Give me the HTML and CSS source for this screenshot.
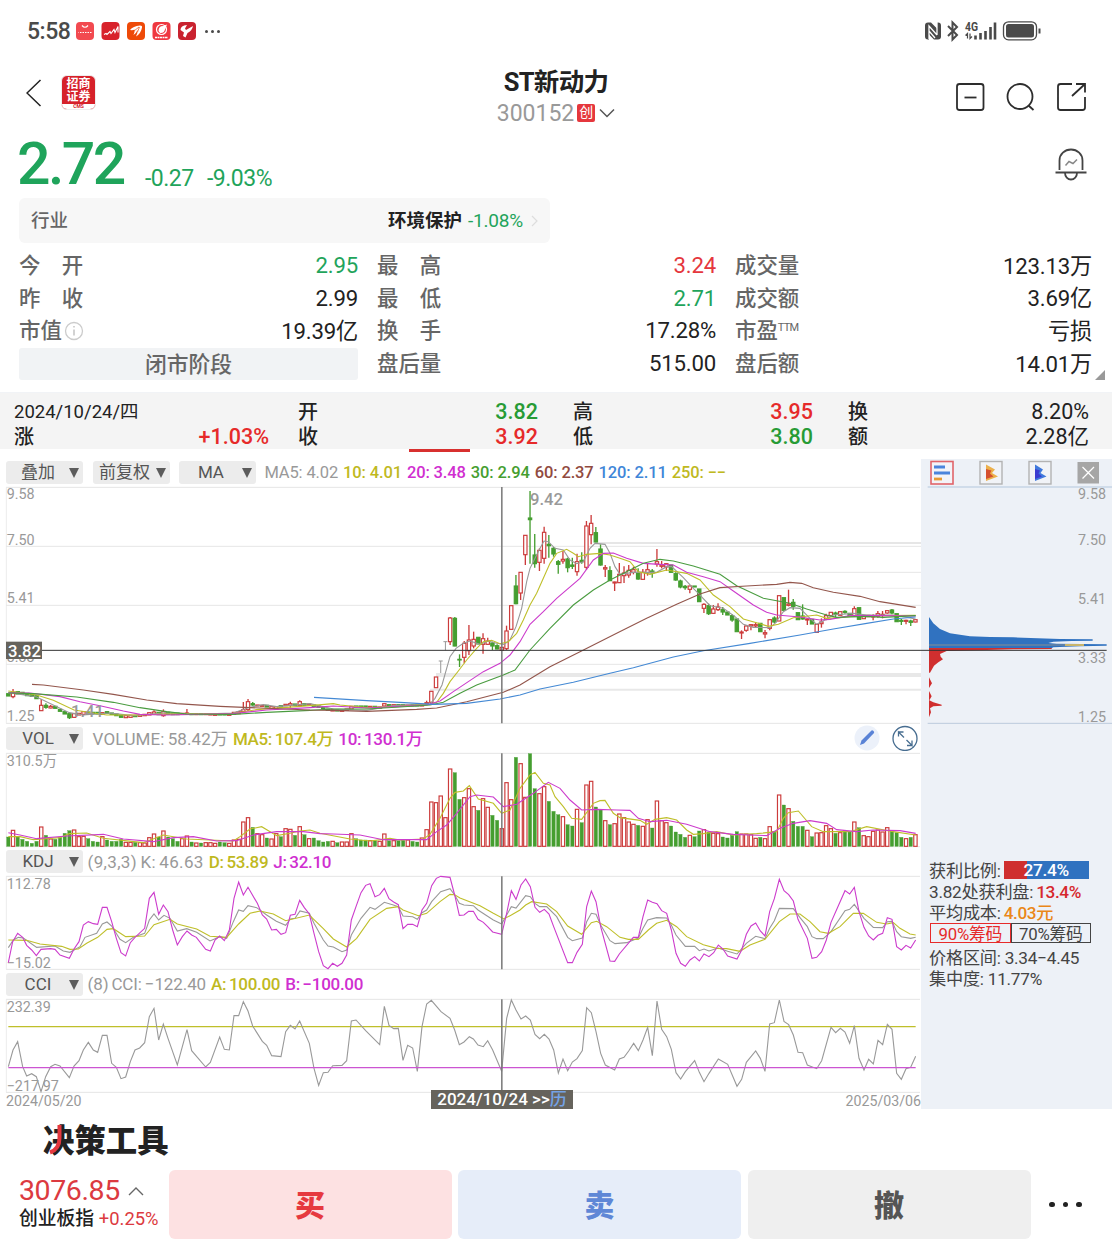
FILE: index.html
```html
<!DOCTYPE html>
<html lang="zh-CN">

<head>
    <meta charset="UTF-8">
    <meta name="viewport" content="width=device-width, initial-scale=1.0">
    <title>ST新动力 300152</title>
    <link rel="stylesheet" href="styles.css">
</head>

<body>
    <div class="status">
        <span class="time">5:58</span>
        <svg class="apps" width="120" height="18" viewBox="0 0 120 18">
            <rect width="18" height="18" rx="4" fill="#f24a50" />
            <path d="M6 3.500q3 3.500 6 0M2.500 10.500h13" fill="none" stroke="#fff" stroke-width="1.200" />
            <path d="M3 10.500h12" stroke="#f24a50" stroke-dasharray="1 1.500" />
            <rect x="25.500" width="18" height="18" rx="4" fill="#d8222b" />
            <path d="M28 12.500l2-1 1 1 3-3 1 2 3-4 1 3 3-6v6" fill="none" stroke="#fff" stroke-width="1.100" />
            <rect x="51" width="18" height="18" rx="4" fill="#ee4a08" />
            <path d="M54 8q3-4 10-4.500 2.500 0 2 2-1 6-6 9 2-3.500 1.500-6.500-1 3-4 5 1.500-3 1-5.500-1.500 1-4.500.500z" fill="#fff" />
            <path d="M58 9l5-4M61.500 10l2-5" stroke="#ee4a08" stroke-width=".7" />
            <rect x="76.500" width="18" height="18" rx="4" fill="#ef3840" />
            <circle cx="85.500" cy="7.500" r="5" fill="none" stroke="#fff" stroke-width="1.200" />
            <path d="M82.500 9q0-5 4.500-5l4-1.500-2 5q-1 4-5 3.500z" fill="#fff" />
            <path d="M79 15.500h13" stroke="#fff" stroke-width="1.500" stroke-dasharray="2 .500" />
            <rect x="102" width="18" height="18" rx="4" fill="#c9222f" />
            <path d="M104.500 8q0-4.500 6.500-5l-2 3.500 1 1.500 7-4q-1 5-5.500 7l-2 4.500-2.500-1.500 1-3.500z" fill="#fff" />
        </svg>
        <span class="dots"><i></i><i></i><i></i></span>
        <svg class="signal" width="118" height="22" viewBox="0 0 118 22">
            <path d="M4 2.500h3l6 6v11H10l-5-5v5H4q-3 0-3-3v-11q0-3 3-3z" fill="#4a4a4a" />
            <path d="M13 2.500h1q3 0 3 3v11q0 3-3 3h-1z" fill="#4a4a4a" />
            <path d="M5 19V6l8 9M13 2v13M5 11l6 7" fill="none" stroke="#fff" stroke-width="1.300" />
            <path d="M24 6l9 9-4.500 4.500V2.500L33 7l-9 9" fill="none" stroke="#4a4a4a" stroke-width="2" />
            <text x="41" y="10.500" class="net" textLength="13" lengthAdjust="spacingAndGlyphs">4G</text>
            <path d="M43.500 18.500v-5l-2 2M46 13.500v5l2-2" fill="none" stroke="#4a4a4a" stroke-width="1.200" />
            <path d="M51.500 19.500v-4M56.500 19.500v-6.500M61.500 19.500v-8.500M66.500 19.500V7M71 19.500V2.500" stroke="#4a4a4a" stroke-width="2.600" />
            <rect x="79.500" y="1.800" width="33" height="18" rx="5" fill="none" stroke="#4a4a4a" stroke-width="1.300" />
            <rect x="82" y="4" width="28" height="13.500" rx="2.500" fill="#4a4a4a" />
            <path d="M115.500 8.500v5" stroke="#4a4a4a" stroke-width="2" />
        </svg>
    </div>

    <div class="header">
        <svg class="back" width="16" height="28" viewBox="0 0 16 28">
            <path d="M14.500 1L1 14l13.500 13" fill="none" stroke="#222" stroke-width="1.500" />
        </svg>
        <div class="logo">
            <span>招商</span>
            <span>证券</span>
            <b>CMS</b>
        </div>
        <div class="stock">
            <h1>ST新动力</h1>
            <div class="code">
                <span>300152</span><em>创</em>
                <svg width="16" height="10" viewBox="0 0 16 10">
                    <path d="M1 1.500l7 7 7-7" fill="none" stroke="#555" stroke-width="1.500" />
                </svg>
            </div>
        </div>
        <svg class="actions" width="132" height="30" viewBox="0 0 132 30">
            <g fill="none" stroke="#2d2d2d" stroke-width="1.800">
                <rect x="2" y="2" width="26.500" height="26" rx="2.500" />
                <path d="M9.500 15.500h12" />
                <circle cx="65" cy="14.500" r="12.500" />
                <path d="M73.500 23.500l5 4.500" />
                <path d="M117 2h-11.500q-2.500 0-2.500 2.500v21q0 2.500 2.500 2.500h22q2.500 0 2.500-2.500V15M121 2h9v8.500M130 2l-13 12" />
            </g>
        </svg>
    </div>

    <div class="price">
        <strong>2.72</strong>
        <span class="diff">-0.27</span>
        <span class="rate">-9.03%</span>
        <svg width="32" height="33" viewBox="0 0 32 33">
            <g fill="none" stroke="#444" stroke-width="1.800">
                <path d="M4.500 22V12.500a11.500 11 0 0 1 23 0V22M.500 24.500h31M10 25a6 6.500 0 0 0 12 0" />
                <path d="M10.500 17.500l3.500-4 4 2 4-4" stroke="#888" stroke-width="1.500" />
            </g>
        </svg>
    </div>

    <div class="industry">
        <span>行业</span>
        <b>环境保护</b>
        <em>-1.08%</em>
        <svg width="8" height="12" viewBox="0 0 8 12">
            <path d="M1 1l5 5-5 5" fill="none" stroke="#ddd" stroke-width="1.200" />
        </svg>
    </div>

    <div class="quotes">
        <dl>
            <dt>今<s></s>开</dt><dd class="down">2.95</dd>
            <dt>昨<s></s>收</dt><dd>2.99</dd>
            <dt>市值<svg width="20" height="20" viewBox="0 0 20 20">
                    <circle cx="10" cy="10" r="8.500" fill="none" stroke="#ccc" stroke-width="1.300" />
                    <path d="M10 8.500v6M10 5v1.500" stroke="#bbb" stroke-width="1.300" />
                </svg></dt><dd>19.39亿</dd>
            <div class="phase">闭市阶段</div>
        </dl>
        <dl>
            <dt>最<s></s>高</dt><dd class="up">3.24</dd>
            <dt>最<s></s>低</dt><dd class="down">2.71</dd>
            <dt>换<s></s>手</dt><dd>17.28%</dd>
            <dt>盘后量</dt><dd>515.00</dd>
        </dl>
        <dl>
            <dt>成交量</dt><dd>123.13万</dd>
            <dt>成交额</dt><dd>3.69亿</dd>
            <dt>市盈<sup>TTM</sup></dt><dd>亏损</dd>
            <dt>盘后额</dt><dd>14.01万</dd>
        </dl>
        <i class="corner"></i>
    </div>

    <div class="daybar">
        <dl>
            <dt class="date">2024/10/24/四</dt><dd></dd>
            <dt>涨</dt><dd class="up">+1.03%</dd>
        </dl>
        <dl>
            <dt>开</dt><dd class="down">3.82</dd>
            <dt>收</dt><dd class="up">3.92</dd>
        </dl>
        <dl>
            <dt>高</dt><dd class="up">3.95</dd>
            <dt>低</dt><dd class="down">3.80</dd>
        </dl>
        <dl>
            <dt>换</dt><dd>8.20%</dd>
            <dt>额</dt><dd>2.28亿</dd>
        </dl>
    </div>
    <div class="tabline"></div>

    <div class="main">
        <div class="charts">
            <div class="tools">
                <span class="select">叠加</span>
                <span class="select">前复权</span>
                <span class="select">MA</span>
                <div class="legend ma">
                    <span class="gray">MA5: 4.02</span>
                    <span class="yellow">10: 4.01</span>
                    <span class="pink">20: 3.48</span>
                    <span class="green">30: 2.94</span>
                    <span class="brown">60: 2.37</span>
                    <span class="blue">120: 2.11</span>
                    <span class="yellow">250: −−</span>
                </div>
            </div>
            <svg id="kline" class="kline" width="921" height="240" viewBox="0 0 2763 720"></svg>

            <div class="tools">
                <span class="select">VOL</span>
                <div class="legend vol">
                    <span class="gray">VOLUME: 58.42万</span>
                    <span class="yellow">MA5: 107.4万</span>
                    <span class="pink">10: 130.1万</span>
                </div>
                <svg class="tool_icons" width="66" height="26" viewBox="0 0 66 26">
                    <circle cx="13" cy="13" r="12.500" fill="#ecf1fa" />
                    <path d="M6 20l1.500-4.500L17.500 5.500q1-.500 2 .500t.500 2L10 18.500z" fill="#5a83d6" />
                    <circle cx="51" cy="13.500" r="12" fill="#fff" stroke="#476d90" stroke-width="1.300" />
                    <path d="M50 12.500l-5.500-5.500v4.500M44.500 7h5M52.500 15l5.500 5.500v-5M58 20.500h-5" fill="none" stroke="#476d90" stroke-width="1.300" />
                </svg>
            </div>
            <svg id="vol" width="921" height="98" viewBox="0 798 2763 294"></svg>

            <div class="tools kdj_tools">
                <span class="select">KDJ</span>
                <div class="legend kdj">
                    <span class="gray">(9,3,3) K: 46.63</span>
                    <span class="yellow">D: 53.89</span>
                    <span class="pink">J: 32.10</span>
                </div>
            </div>
            <svg id="kdj" width="921" height="97" viewBox="0 72 2763 291"></svg>

            <div class="tools">
                <span class="select">CCI</span>
                <div class="legend cci">
                    <span class="gray">(8) CCI: −122.40</span>
                    <span class="yellow">A: 100.00</span>
                    <span class="pink">B: −100.00</span>
                </div>
            </div>
            <svg id="cci" width="921" height="96" viewBox="0 441 2763 288"></svg>

            <div class="dates">
                <span>2024/05/20</span>
                <div class="cursor_date">2024/10/24 &gt;&gt;<em>历</em></div>
                <span>2025/03/06</span>
            </div>
        </div>

        <div class="chips">
            <svg class="chip_tabs" width="191" height="26" viewBox="0 0 191 26">
                <rect x="10" y="2.500" width="22" height="22.500" fill="#f3f3f8" stroke="#e0646a" stroke-width="1.600" />
                <path d="M13 8h11M13 14h16" stroke="#4b84dc" stroke-width="2.800" />
                <path d="M13 20h8" stroke="#e79a35" stroke-width="2.800" />
                <rect x="59" y="2.500" width="22" height="22.500" fill="#f1f3f7" stroke="#b3b3b3" stroke-width="1.400" />
                <path d="M65 5.500l9 5-3 3.500 6 3.500-12 4.500z" fill="#ecb04b" />
                <path d="M65 10l5.500 1.500-1.500 3 3.500 3-7.500 2.500z" fill="#d5502f" />
                <rect x="108" y="2.500" width="22" height="22.500" fill="#f1f3f7" stroke="#b3b3b3" stroke-width="1.400" />
                <path d="M114 5.500l8 5-2.500 3.500 6 3.500-11.500 4.500z" fill="#3f79dc" />
                <path d="M114 10l5 1.500-1.500 3 3.500 3-7 2.500z" fill="#3a3bd0" />
                <rect x="156.500" y="3" width="21.500" height="21.500" fill="#a6a6a6" />
                <path d="M161.500 8l11.500 11.500M173 8L161.500 19.500" stroke="#fff" stroke-width="1.300" />
            </svg>
            <svg id="profile" width="191" height="240" viewBox="33 90 573 720"></svg>
            <div class="chip_info">
                <p>获利比例: <span class="ratio">27.4%</span></p>
                <p>3.82处获利盘: <b class="red">13.4%</b></p>
                <p>平均成本: <b class="orange">4.03元</b></p>
                <div class="chip_switch"><span class="active">90%筹码</span><span>70%筹码</span></div>
                <p>价格区间: 3.34−4.45</p>
                <p>集中度: 11.77%</p>
            </div>
        </div>
    </div>

    <div class="decision">
        <h2>决策工具</h2>
        <svg width="18" height="32" viewBox="0 0 18 32">
            <path d="M13.500 1v13q0 11-9.500 14.500" fill="none" stroke="#e5383f" stroke-width="4" />
        </svg>
    </div>

    <div class="footer">
        <div class="index">
            <div class="point">3076.85<svg width="16" height="10" viewBox="0 0 16 10">
                    <path d="M1 9l7-7 7 7" fill="none" stroke="#666" stroke-width="1.400" />
                </svg></div>
            <div class="name">创业板指 <span>+0.25%</span></div>
        </div>
        <button class="buy">买</button>
        <button class="sell">卖</button>
        <button class="cancel">撤</button>
        <span class="more"><i></i><i></i><i></i></span>
    </div>

    <script src="chart.js"></script>
</body>

</html>
```
FILE: styles.css
```css
* {
    box-sizing: border-box;
}

body {
    width: 1112px;
    height: 1248px;
    margin: 0;
    overflow: hidden;
    background: #fff;
    color: #222;
    font-family: Roboto, "Noto Sans CJK SC", sans-serif;
    font-kerning: none;
}

svg {
    display: block;
    flex: none;
}

h1,
h2,
p,
dl,
dd {
    margin: 0;
}

em,
i {
    font-style: normal;
}

.up {
    color: #e5373d;
}

.down {
    color: #1fa45b;
}

/* 状态栏 */
.status {
    display: flex;
    align-items: center;
    height: 62px;
    padding: 0 70px 0 27px;
}

.time {
    width: 49px;
    font-size: 23px;
    font-weight: 500;
    letter-spacing: -0.5px;
    color: #4a4a4a;
}

.dots,
.more {
    display: flex;
    gap: 3px;
    margin-left: 9px;
}

.dots i {
    width: 3px;
    height: 3px;
    border-radius: 50%;
    background: #4a4a4a;
}

.signal {
    margin-left: auto;
}

/* 标题 */
.header {
    display: flex;
    align-items: flex-start;
    height: 68px;
    padding: 0 25px 0 26px;
}

.back {
    margin-top: 17px;
}

.logo {
    width: 35px;
    height: 35px;
    margin: 13px 0 0 19px;
    overflow: hidden;
    border: 1px solid #eee;
    border-radius: 6px;
    background: #d6212a;
    color: #fff;
    text-align: center;
}

.logo span {
    display: block;
    height: 13px;
    font: 700 12px/14px "Noto Sans CJK SC", sans-serif;
}

.logo b {
    display: block;
    height: 7px;
    margin-top: 2px;
    background: #fff;
    color: #d6212a;
    font-size: 5px;
    line-height: 5px;
}

.stock {
    display: flex;
    flex-direction: column;
    align-items: center;
    width: 200px;
    margin-left: 360px;
}

.stock h1 {
    margin-top: 5px;
    font-size: 25.5px;
    line-height: 31px;
    letter-spacing: -0.7px;
    white-space: nowrap;
}

.code {
    display: flex;
    align-items: center;
    margin-top: 3px;
    height: 24px;
    font-size: 23px;
    color: #999;
}

.code em {
    width: 18px;
    height: 18px;
    margin: 0 4px 0 3px;
    border-radius: 2px;
    background: #e5373d;
    color: #fff;
    font-size: 14px;
    line-height: 17px;
    text-align: center;
}

.actions {
    margin: 20px 0 0 auto;
}

/* 价格 */
.price {
    display: flex;
    align-items: flex-start;
    height: 68px;
    padding: 0 25px 0 17px;
    color: #1fa45b;
}

.price strong {
    width: 128px;
    font-size: 59px;
    font-weight: 500;
    line-height: 68px;
    letter-spacing: -2.6px;
}

.price span {
    width: 62px;
    margin-top: 37px;
    font-size: 23px;
    line-height: 24px;
    letter-spacing: -0.5px;
}

.price svg {
    margin: 18px 0 0 auto;
}

.industry {
    display: flex;
    align-items: center;
    width: 531px;
    height: 45px;
    margin-left: 19px;
    padding: 1px 11px 0 12px;
    border-radius: 6px;
    background: #f7f7f7;
    font-size: 18.5px;
    line-height: 28px;
}

.industry > span {
    margin-right: auto;
    color: #666;
    font-weight: 500;
}

.industry em {
    margin: 0 8px 0 6px;
    color: #1fa45b;
    font-size: 19px;
    letter-spacing: -0.2px;
}

/* 行情 */
.quotes {
    position: relative;
    display: flex;
    gap: 19px;
    height: 149px;
    padding: 6px 20px 0 19px;
}

.quotes dl {
    display: grid;
    grid-template-columns: auto auto;
    grid-template-rows: repeat(4, 32.6px);
    justify-content: space-between;
    align-items: center;
    width: 339px;
}

.quotes dl:last-of-type {
    width: 357px;
}

.quotes dt {
    display: flex;
    align-items: center;
    height: 30px;
    margin-top: 2px;
    color: #666;
    font-size: 21.4px;
    font-weight: 500;
    line-height: 30px;
}

.quotes dt s {
    width: 21.4px;
}

.quotes dt svg {
    margin: 0 0 0 2px;
}

.quotes dt sup {
    align-self: flex-start;
    height: 20px;
    font-size: 11px;
    font-weight: 400;
    line-height: 24px;
    letter-spacing: -0.7px;
}

.quotes dd {
    height: 30px;
    font-size: 22.2px;
    line-height: 30px;
    text-align: right;
    letter-spacing: -0.2px;
}

.quotes dl:last-of-type dd,
.quotes dl:first-of-type dd:nth-of-type(3) {
    margin-top: 1px;
}

.phase {
    grid-column: 1 / 3;
    height: 32px;
    margin-top: 2px;
    border-radius: 3px;
    background: #f1f3f5;
    color: #666;
    font-size: 21.8px;
    font-weight: 500;
    line-height: 33px;
    text-align: center;
}

.corner {
    position: absolute;
    right: 7px;
    bottom: 12px;
    border: 5.5px solid transparent;
    border-right-color: #999;
    border-bottom-color: #999;
}

.daybar {
    display: flex;
    height: 57px;
    padding: 7px 23px 0 14px;
    background: #f4f4f4;
    border-top: 1px solid #f1f3f6;
    gap: 29px;
}

.daybar dl {
    display: grid;
    grid-template-columns: auto auto;
    grid-template-rows: 24.5px 24.5px;
    justify-content: space-between;
    align-items: center;
    width: 255px;
    font-size: 20px;
    line-height: 24px;
}

.daybar dl + dl {
    width: 240px;
    margin-right: 6px;
}

.daybar dl:last-child {
    width: 241px;
    margin-right: 0;
}

.daybar dt {
    font-weight: 500;
}

.daybar dd {
    font-size: 21.5px;
    font-weight: 500;
    text-align: right;
}

.daybar dl:last-child dd {
    font-weight: 400;
}

.daybar .date {
    font-size: 18.5px;
    font-weight: 400;
}

.daybar .up {
    color: #e62a2a;
}

.daybar .down {
    color: #279b35;
}

.tabline {
    width: 61px;
    height: 3px;
    margin: 0 0 7px 409px;
    background: #d8302f;
}

/* 图表 */
.main {
    display: flex;
    height: 650px;
}

.charts {
    width: 921px;
}

.tools {
    display: flex;
    align-items: center;
    height: 26px;
    padding: 0 1px 0 6px;
}

.kdj_tools {
    height: 25px;
}

.select {
    position: relative;
    width: 77px;
    height: 23px;
    margin-right: 9.5px;
    padding-right: 13px;
    border-radius: 3px;
    background: #ececec;
    color: #555;
    font-size: 17px;
    line-height: 23px;
    text-align: center;
}

.select::after {
    content: "";
    position: absolute;
    right: 4px;
    top: 7px;
    border: 5px solid transparent;
    border-top: 10px solid #5c5c5c;
    border-bottom: 0;
}

.legend {
    display: flex;
    font-size: 16.5px;
    font-weight: 500;
    line-height: 22px;
    white-space: pre;
}

.legend .gray {
    font-weight: 400;
}

.ma {
    margin: 1px 0 0 -1px;
    gap: 5px;
    letter-spacing: -0.13px;
}

.vol,
.kdj,
.cci {
    gap: 5px;
    font-size: 17px;
    letter-spacing: -0.3px;
    word-spacing: -1.2px;
}

.vol {
    margin-top: 1px;
}

.vol .gray {
    letter-spacing: 0.1px;
}

.kdj,
.cci {
    margin-left: -5px;
}

.kdj .gray {
    letter-spacing: 0.35px;
}

.cci .gray {
    letter-spacing: -0.1px;
}

.gray {
    color: #999;
}

.yellow {
    color: #bfb91f;
}

.pink {
    color: #d02fd0;
}

.green {
    color: #459e30;
}

.brown {
    color: #914a40;
}

.blue {
    color: #3f86d8;
}

.tool_icons {
    margin-left: auto;
}

svg text {
    font-size: 43px;
    fill: #999;
}

svg .net {
    font-size: 12px;
    font-weight: 700;
    fill: #4a4a4a;
}

svg .peak {
    font-size: 50px;
    font-weight: 500;
}

svg .cursor_text {
    font-size: 50px;
    font-weight: 500;
    fill: #fff;
}

.dates {
    position: relative;
    display: flex;
    justify-content: space-between;
    align-items: center;
    height: 16px;
    padding-left: 6px;
    color: #999;
    font-size: 14.2px;
}

.cursor_date {
    position: absolute;
    left: 431px;
    top: -3px;
    width: 142px;
    height: 19px;
    background: #66635c;
    color: #fff;
    font-size: 17px;
    font-weight: 500;
    line-height: 19px;
    text-align: center;
    white-space: nowrap;
}

.cursor_date em {
    color: #74a2e6;
}

/* 筹码 */
.chips {
    width: 191px;
    background: #edf1f7;
}

.chip_info {
    margin-top: 135px;
    padding-left: 8px;
    color: #444;
    font-size: 17.2px;
    line-height: 22px;
    letter-spacing: -0.25px;
    white-space: nowrap;
}

.chip_info p {
    display: flex;
    gap: 3px;
    height: 21px;
}

.chip_info b {
    font-weight: 500;
    letter-spacing: -0.4px;
}

.ratio {
    width: 85px;
    height: 18px;
    margin-top: 1px;
    background: linear-gradient(90deg, #cf2f2f 27.4%, #3072c0 27.4%);
    color: #fff;
    font-weight: 500;
    line-height: 19px;
    text-align: center;
}

.red {
    color: #d6282d;
}

.orange {
    color: #ea8718;
}

.chip_switch {
    display: flex;
    width: 161px;
    height: 20px;
    margin: 0 0 4px 1px;
    font-size: 16.8px;
    line-height: 20px;
}

.chip_switch span {
    flex: 1;
    border: 1px solid #444;
    text-align: center;
}

.chip_switch .active {
    border-color: #e62a2a;
    color: #e62a2a;
}

.decision {
    position: relative;
    height: 61px;
    padding: 12px 0 0 43px;
}

.decision h2 {
    font: 900 31.4px/35px "Noto Sans CJK SC", sans-serif;
}

.decision svg {
    position: absolute;
    left: 46px;
    top: 15px;
}

/* 底部 */
.footer {
    display: flex;
    align-items: center;
    gap: 6.5px;
    height: 69px;
    padding-left: 19px;
}

.index {
    width: 143px;
    margin-top: -3px;
    white-space: nowrap;
}

.point {
    display: flex;
    align-items: center;
    gap: 8px;
    font-size: 28.5px;
    line-height: 32px;
    letter-spacing: -0.4px;
    color: #dc3a40;
}

.name {
    font-size: 18.8px;
    font-weight: 500;
    line-height: 24px;
}

.name span {
    font-size: 18.4px;
    font-weight: 400;
    color: #dc3a40;
}

.footer button {
    width: 283px;
    height: 69px;
    padding: 0 0 4px;
    border: none;
    border-radius: 6px;
    font: 900 30px "Noto Sans CJK SC", sans-serif;
}

.footer .buy {
    background: #fde1e2;
    color: #e6393f;
}

.footer .sell {
    background: #e6edf9;
    color: #5f87d6;
}

.footer .cancel {
    background: #efefef;
    color: #555;
}

.more {
    gap: 8px;
    margin-left: 12px;
}

.more i {
    width: 5.5px;
    height: 5.5px;
    border-radius: 50%;
    background: #222;
}
```
FILE: chart.js
```js
const NS = 'http://www.w3.org/2000/svg'
const RED = '#cc3b3b'
const GREEN = '#459e30'
const COLORS = { gray: '#999', yellow: '#bfbf2a', pink: '#cc3ccc', green: '#4a9c40', brown: '#93564c', blue: '#4489d4' }

// 每根K线: 实体上沿,下沿,最高,最低 (+阳 -阴 =一字)
const candles = `-626,633 +622,635,612,640 -620,627 -622,628 -625,632 -628,634 -632,641 +661,677,642,677 -661,667,655,671 +664,669,660,670
-664,670 -673,679 -680,687 -686,698,682,702 +686,697,684,699 +685,690 +680,688 -681,688 -682,686 -682,687
+683,688 -680,685 -684,688 -687,692 -690,697 +692,698 +691,697 -691,695 +689,694 +688,692
+683,690 +681,688,676,690 -682,689 +680,692,673,695 -682,688 -684,689 -684,689 +685,688 +684,688,672,689 -686,689
+686,689 -686,689 +686,689 +686,690 +687,691 -686,690 -686,690 +687,691 +682,688 +680,686
+674,680,651,682 +650,674,642,678 -656,660,651,662 +660,663 +661,664 -661,666 +665,671 +665,672 -662,667 +658,662
+656,661,650,668 -657,661 +650,662,646,664 -656,661 +657,660 -660,664 -663,667 -668,671 -672,676 +674,678
-674,678 +675,679 +672,676 +664,672 -663,667 -663,667 -663,667 +664,667 -664,667 +666,670
+656,663 -659,662 +659,662 -659,663 -659,663 +660,663 -659,663 -659,663 +659,663 +653,657,647,658
+619,652 +576,608 =528,564 =470,496 +399,470,396,480 -400,483,396,484 -523,525,508,546 +475,517,468,535 +465,497,420,510 +463,483,440,490
-457,477 +461,478,445,506 +468,478,458,480 -474,483,470,495 -482,492,478,493 +487,496 +438,491,422,495 +362,433 -303,356,270,358 +262,324,262,345
+151,209,151,240 -99,104,18,236 -210,236,147,248 +196,232,190,258 +142,220,125,236 -178,182,150,218 -190,207,186,215 -230,238,225,266 +223,228,198,236 -222,248,218,262
-240,244,218,252 +230,260,206,272 -226,230,202,236 +123,247,108,255 +115,149,90,178 -143,171,126,172 -192,240,178,242 +248,252,240,276 -257,287,244,288 +291,294,290,318
+268,293,234,294 +264,272,244,294 +256,270,240,278 +254,262,245,268 -262,282,250,284 +262,283,252,284 +254,264,235,272 -258,264,252,278 +230,237,192,245 +240,244,228,250
+236,246,234,258 -240,262 -266,285,262,287 -288,306,284,310 -304,308,300,314 +303,313,302,325 -303,306 -312,350 +358,370,355,384 -362,386,356,390
+372,385,360,386 +366,374,355,378 -374,381,366,390 -381,390 -392,405,388,410 -402,440 +441,444,436,462 +423,436,420,440 +419,423,418,436 +419,423,412,426
-415,440 +443,447,435,460 +404,430,402,436 -399,411,394,415 +332,408 -338,376 +357,361,314,364 -352,364,342,374 -383,404 -393,402,358,404
+402,405,400,420 -403,417 +418,442 +411,416,400,428 +392,402,386,406 +382,392 -384,388,380,396 +380,391 -379,382,376,386 -385,394
+371,393,364,396 -368,403 +391,401 +391,395 +392,396,388,406 +386,394,378,398 +388,391,378,400 +377,384,375,386 -375,384,372,388 -386,410
-406,409,402,420 +406,409,404,418 -408,412,404,423 +404,411,402,412`.split(/\s+/)

// 成交量柱顶
const volumes = [
    1055, 1035, 1054, 1062, 1068, 1074, 1068, 1025, 1050, 1061, 1062, 1056, 1044, 1036, 1034, 1054, 1053, 1060, 1068, 1070,
    1054, 1064, 1068, 1068, 1062, 1071, 1071, 1071, 1072, 1073, 1057, 1046, 1055, 1037, 1055, 1060, 1068, 1060, 1052, 1070,
    1073, 1073, 1072, 1072, 1074, 1070, 1072, 1074, 1064, 1062, 1010, 997, 1026, 1045, 1048, 1058, 1061, 1045, 1054, 1030,
    1032, 1050, 1024, 1048, 1060, 1058, 1066, 1070, 1068, 1068, 1072, 1070, 1070, 1045, 1060, 1064, 1064, 1066, 1066, 1068,
    1046, 1066, 1066, 1066, 1065, 1064, 1068, 1070, 1058, 1033, 950, 952, 932, 997, 851, 862, 942, 937, 910, 964,
    975, 940, 966, 990, 1005, 1030, 892, 943, 816, 835, 936, 805, 910, 925, 904, 948, 978, 988, 994, 1018,
    1022, 972, 1012, 899, 888, 965, 972, 1006, 1018, 1015, 986, 997, 1010, 1017, 1020, 1023, 1003, 1028, 947, 1006,
    1012, 1022, 1040, 1047, 1056, 1050, 1054, 1037, 1033, 1040, 1044, 1045, 1055, 1058, 1050, 1039, 1046, 1046, 1048, 1059,
    1056, 1060, 1024, 1038, 929, 959, 970, 1008, 1023, 1023, 1035, 1054, 1043, 1042, 1021, 1030, 1044, 1042, 1036, 1040,
    1010, 1027, 1051, 1054, 1038, 1034, 1040, 1027, 1035, 1042, 1056, 1060, 1056, 1048
]

const maLines = {
    gray: '25,622 110,636 208,683 250,690 330,684 400,692 490,684 600,687 700,684 744,668 790,659 830,665 930,656 1000,672 1100,676 1180,662 1290,657 1305,640 1326,600 1340,550 1350,515 1368,490 1390,475 1410,468 1440,478 1465,468 1490,475 1512,478 1530,465 1548,425 1565,370 1580,290 1590,250 1605,220 1620,190 1632,168 1645,170 1665,190 1690,195 1710,225 1730,236 1750,230 1770,190 1785,175 1815,178 1830,205 1845,245 1860,268 1900,262 1970,262 2000,245 2015,245 2050,278 2080,310 2095,325 2130,362 2170,370 2205,395 2230,418 2260,427 2310,428 2325,415 2350,380 2370,368 2400,370 2430,400 2450,418 2475,405 2500,390 2560,385 2600,390 2680,390 2747,402',
    yellow: '25,618 110,630 160,646 222,675 320,690 400,690 500,687 690,687 770,674 850,668 930,662 1000,656 1020,660 1100,668 1200,664 1290,658 1310,652 1330,625 1350,590 1375,558 1400,525 1430,490 1450,470 1475,466 1500,476 1525,470 1550,445 1570,405 1590,360 1610,325 1630,280 1650,235 1670,205 1700,193 1720,205 1735,215 1760,208 1800,205 1830,210 1860,220 1890,230 1915,260 1950,268 2000,255 2060,265 2100,285 2140,330 2190,365 2230,402 2275,415 2305,424 2335,418 2380,398 2450,390 2480,400 2520,398 2570,392 2660,392 2747,391',
    pink: '25,624 90,624 180,635 240,650 300,662 370,678 420,688 500,690 700,686 800,675 930,668 1000,663 1100,669 1200,664 1280,660 1320,648 1360,620 1405,590 1450,560 1500,535 1530,510 1560,470 1590,418 1630,380 1670,340 1740,280 1780,225 1810,205 1840,204 1880,220 1930,235 1980,238 2020,240 2060,262 2110,275 2160,290 2200,318 2260,360 2300,382 2330,390 2400,396 2460,405 2490,403 2550,392 2640,392 2747,393',
    green: '25,624 100,626 230,636 340,652 420,668 500,680 560,687 700,688 800,682 930,676 1000,672 1100,672 1200,666 1290,660 1330,652 1380,625 1430,600 1510,570 1545,555 1590,495 1650,430 1720,360 1780,315 1830,285 1890,255 1930,235 1980,223 2020,228 2080,243 2160,268 2210,302 2290,340 2370,355 2420,372 2480,390 2510,397 2600,394 2650,397 2747,392',
    brown: '96,598 130,600 250,615 340,628 440,645 530,656 660,664 780,669 930,675 1000,676 1100,679 1250,673 1310,669 1400,650 1510,622 1560,600 1650,545 1740,500 1850,445 1940,400 2030,358 2100,327 2160,308 2240,303 2330,298 2370,292 2405,295 2440,308 2500,322 2580,334 2640,350 2747,367',
    blue: '942,637 1100,647 1200,652 1300,658 1400,655 1500,642 1560,630 1620,612 1720,592 1830,565 1900,548 2020,516 2110,497 2250,475 2400,450 2500,432 2600,415 2680,402 2747,396'
}

const volLines = {
    yellow: '25,1055 60,1055 100,1064 180,1058 208,1046 260,1044 310,1060 430,1073 490,1050 560,1062 700,1068 720,1055 750,1032 785,1025 830,1052 870,1045 900,1038 930,1035 960,1045 1050,1062 1110,1068 1170,1060 1200,1065 1270,1062 1290,1048 1320,1000 1350,940 1365,922 1390,918 1408,902 1435,942 1480,955 1505,985 1530,975 1560,910 1590,870 1605,862 1630,895 1650,900 1665,935 1690,965 1715,1000 1745,1003 1780,955 1800,947 1815,946 1840,985 1860,998 1920,1006 1940,1018 1965,1003 2000,998 2030,1005 2060,1035 2080,1048 2110,1046 2150,1040 2200,1050 2270,1046 2330,1040 2350,1000 2365,983 2395,978 2435,1025 2470,1040 2550,1040 2600,1025 2680,1040 2747,1050',
    pink: '25,1043 60,1050 110,1061 200,1053 310,1048 370,1062 460,1070 520,1058 580,1055 650,1068 710,1067 760,1050 830,1040 910,1040 960,1046 1000,1047 1080,1050 1150,1064 1280,1064 1310,1040 1340,1020 1370,985 1410,935 1430,930 1480,936 1510,965 1550,958 1600,925 1645,892 1680,910 1710,945 1745,975 1790,973 1850,975 1890,976 1915,1000 1950,1010 2000,1006 2060,1018 2130,1040 2200,1048 2300,1052 2340,1030 2380,1015 2430,1007 2480,1015 2510,1034 2570,1040 2620,1035 2700,1037 2747,1045'
}

const kdjLines = {
    gray: '25,293 40,270 55,262 70,264 110,292 165,288 190,303 210,307 240,290 255,262 290,250 307,222 321,216 335,228 360,268 377,278 400,262 434,250 448,210 462,192 476,210 492,196 510,205 532,243 560,236 590,247 630,273 660,260 680,265 700,215 716,180 730,184 744,167 770,173 800,195 829,214 857,226 871,207 885,205 900,183 928,190 942,220 970,270 984,288 1000,291 1026,305 1040,300 1054,255 1083,205 1110,172 1125,178 1153,157 1180,165 1195,170 1209,198 1238,200 1252,208 1266,188 1280,180 1295,155 1322,125 1350,116 1364,135 1378,160 1392,165 1420,167 1434,180 1480,210 1505,222 1520,195 1534,170 1548,174 1577,137 1591,140 1605,160 1619,170 1640,170 1670,200 1703,262 1717,272 1747,264 1760,215 1774,190 1788,193 1802,225 1830,272 1845,281 1880,278 1915,264 1929,235 1943,210 1970,203 2000,204 2014,225 2028,255 2056,289 2084,289 2098,302 2112,297 2127,303 2155,294 2183,304 2211,312 2239,280 2267,259 2295,266 2309,235 2323,212 2338,175 2380,176 2400,203 2422,230 2436,260 2450,266 2470,266 2493,245 2535,182 2549,178 2563,163 2592,205 2620,232 2648,233 2662,215 2676,214 2690,245 2704,260 2732,265 2747,262',
    yellow: '25,270 80,271 120,282 185,289 210,298 235,297 260,280 293,262 321,238 340,236 377,260 434,258 462,224 510,208 532,222 590,237 630,259 680,262 716,222 750,190 780,183 820,192 857,212 928,195 970,236 1000,267 1040,291 1070,265 1110,208 1160,175 1195,170 1209,180 1255,197 1280,190 1320,155 1350,133 1364,134 1380,144 1440,167 1480,190 1512,207 1534,195 1560,180 1577,165 1595,155 1640,162 1670,185 1703,228 1745,253 1774,218 1790,214 1820,230 1860,262 1885,268 1915,268 1945,240 1970,220 2000,211 2030,230 2060,260 2110,284 2150,295 2180,296 2220,304 2250,285 2295,268 2338,215 2370,192 2400,192 2430,215 2460,245 2485,250 2520,230 2560,190 2590,190 2630,217 2660,222 2680,218 2700,235 2730,252 2747,255',
    pink: '25,338 38,275 53,250 68,262 80,286 95,300 109,317 123,298 152,296 165,298 180,315 208,325 222,297 237,275 250,225 265,215 280,221 293,223 307,172 321,172 335,215 349,265 363,308 377,318 391,278 405,262 434,235 448,145 462,127 476,193 490,165 504,185 518,240 532,285 547,260 561,243 575,255 589,262 617,298 631,303 645,270 659,258 673,272 688,240 702,145 716,96 730,135 744,112 772,160 787,195 800,207 815,240 829,238 843,253 857,248 871,196 885,193 899,151 913,173 928,192 942,250 956,305 970,347 984,356 998,340 1012,349 1026,340 1040,315 1054,210 1068,170 1083,128 1097,106 1110,101 1125,140 1139,134 1153,115 1167,146 1181,156 1195,164 1209,236 1223,223 1238,223 1252,230 1266,180 1280,160 1295,107 1309,85 1322,79 1350,82 1364,135 1378,196 1392,195 1406,184 1420,184 1434,208 1450,217 1463,230 1478,246 1505,253 1520,190 1534,122 1548,148 1563,105 1577,87 1591,110 1605,172 1619,187 1633,178 1647,192 1661,230 1703,338 1717,338 1731,307 1747,283 1760,170 1774,123 1788,155 1802,230 1830,333 1844,334 1858,312 1900,262 1915,262 1929,200 1943,150 1957,157 1971,161 1985,182 2000,190 2014,240 2028,310 2042,340 2056,349 2070,330 2084,320 2098,333 2112,312 2127,320 2141,308 2155,285 2169,297 2183,318 2211,327 2225,300 2239,253 2253,228 2267,219 2281,243 2295,258 2309,185 2323,146 2338,88 2352,122 2366,134 2380,153 2394,208 2422,265 2436,325 2450,322 2465,305 2479,270 2493,217 2535,122 2549,132 2563,112 2577,185 2592,232 2606,258 2620,270 2634,256 2648,250 2662,203 2676,208 2690,290 2704,300 2718,286 2732,294 2747,270'
}

const cciLine = '25,650 39,600 53,575 68,650 80,678 95,671 109,680 123,725 137,680 152,650 165,643 180,648 208,683 222,648 237,632 250,600 265,577 280,600 293,607 307,556 321,556 335,640 349,652 363,686 377,681 391,635 405,600 419,594 434,578 448,500 462,475 476,570 490,522 504,565 532,645 547,590 561,539 575,602 617,651 631,637 659,561 673,598 688,600 702,497 716,497 730,455 744,483 758,528 787,574 800,586 815,617 843,620 857,545 871,526 885,537 899,513 928,580 942,655 956,706 970,668 984,667 998,647 1026,646 1040,632 1054,513 1068,510 1097,542 1139,584 1153,469 1167,526 1181,536 1195,535 1209,631 1223,586 1238,594 1252,664 1266,530 1280,462 1294,451 1323,485 1350,505 1364,540 1378,584 1392,576 1408,560 1420,567 1434,585 1450,590 1463,572 1478,600 1505,664 1520,505 1534,450 1548,480 1563,507 1577,498 1591,510 1605,553 1619,566 1633,553 1647,567 1661,600 1675,669 1689,627 1703,662 1717,636 1731,626 1747,602 1760,473 1774,488 1788,545 1802,610 1816,645 1844,660 1858,627 1872,622 1886,603 1901,580 1915,602 1929,570 1943,532 1957,617 1971,453 1985,538 2000,560 2014,598 2028,668 2042,687 2056,665 2084,632 2098,667 2112,695 2127,670 2155,627 2183,643 2211,709 2225,688 2239,637 2267,603 2281,625 2295,664 2309,522 2323,518 2338,450 2352,514 2366,524 2380,555 2394,607 2408,608 2422,645 2450,656 2465,632 2493,532 2507,548 2521,535 2535,546 2549,580 2563,527 2577,625 2592,660 2606,628 2620,642 2634,571 2648,584 2662,523 2676,538 2690,670 2704,688 2718,656 2732,652 2747,619'

function add(svg, tag, attrs, text) {
    const el = document.createElementNS(NS, tag)
    for (const k in attrs) el.setAttribute(k, attrs[k])
    if (text) el.textContent = text
    svg.appendChild(el)
}

function line(svg, x1, y1, x2, y2, color, w) {
    add(svg, 'line', { x1, y1, x2, y2, stroke: color, 'stroke-width': w || 3 })
}

function curve(svg, points, color) {
    add(svg, 'polyline', { points, fill: 'none', stroke: color, 'stroke-width': 3.3 })
}

function label(svg, x, y, text, cls, anchor) {
    add(svg, 'text', { x, y, class: cls || '', 'text-anchor': anchor || 'start' }, text)
}

function barX(i) {
    return 25 + 14.1 * i
}

function frame(svg, top, bottom) {
    line(svg, 18, top, 2760, top, '#e5e5e5')
    line(svg, 18, bottom, 2760, bottom, '#e5e5e5')
    line(svg, 19, top, 19, bottom, '#ececec')
}

// K线
const kline = document.querySelector('#kline')
frame(kline, 7, 715)
;[184, 361, 538].forEach(y => line(kline, 18, y, 2763, y, '#e6e6e6'))
line(kline, 1308, 570, 2763, 570, '#e8e8e8', 12)
line(kline, 1290, 614, 2763, 614, '#e8e8e8', 6)
line(kline, 1785, 174, 2763, 174, '#e6e6e6', 6)
line(kline, 2010, 262, 2763, 262, '#e6e6e6')
line(kline, 2085, 310, 2763, 310, '#eee')
label(kline, 20, 41, '9.58')
label(kline, 20, 179, '7.50')
label(kline, 20, 355, '5.41')
label(kline, 20, 532, '3.33')
label(kline, 20, 709, '1.25')

candles.forEach((item, i) => {
    const [top, bottom, high, low] = item.slice(1).split(',').map(Number)
    const x = barX(i)
    if (item[0] === '=') {
        line(kline, x, top, x, bottom, '#999')
        line(kline, x - 6, top, x + 6, top, '#999')
        return
    }
    const up = item[0] === '+'
    const color = up ? RED : GREEN
    if (high) line(kline, x, high, x, low, color, 4)
    const body = { x: x - 5, y: top, width: 10, height: bottom - top, fill: up ? '#fff' : GREEN, stroke: color, 'stroke-width': 3.5 }
    add(kline, 'rect', body)
})
for (const name in maLines) curve(kline, maLines[name], COLORS[name])
label(kline, 213, 697, '1.41', 'peak')
label(kline, 1590, 60, '9.42', 'peak')
line(kline, 1505.5, 6, 1505.5, 715, '#777', 4.5)
line(kline, 18, 496, 2763, 496, '#333')
add(kline, 'rect', { x: 18, y: 470, width: 108, height: 52, fill: '#66635c' })
label(kline, 24, 515, '3.82', 'cursor_text')

// 成交量
const vol = document.querySelector('#vol')
frame(vol, 805, 1085)
label(vol, 20, 842, '310.5万')
volumes.forEach((top, i) => {
    const up = candles[i][0] !== '-'
    add(vol, 'rect', {
        x: barX(i) - 5, y: top + 1, width: 10, height: 1083 - top,
        fill: up ? '#fff' : GREEN, stroke: up ? RED : GREEN, 'stroke-width': up ? 3.5 : 1
    })
})
for (const name in volLines) curve(vol, volLines[name], COLORS[name])
line(vol, 1505.5, 805, 1505.5, 1085, '#777', 4.5)

// KDJ
const kdj = document.querySelector('#kdj')
frame(kdj, 79, 358)
label(kdj, 20, 116, '112.78')
label(kdj, 20, 354, '−15.02')
for (const name in kdjLines) curve(kdj, kdjLines[name], COLORS[name])
line(kdj, 1505.5, 79, 1505.5, 358, '#777', 4.5)

// CCI
const cci = document.querySelector('#cci')
frame(cci, 448, 727)
label(cci, 20, 485, '232.39')
label(cci, 20, 723, '−217.97')
line(cci, 25, 530, 2747, 530, COLORS.yellow, 4)
curve(cci, cciLine, '#999')
line(cci, 25, 653, 2747, 653, '#cc55d2', 4)
line(cci, 1505.5, 448, 1505.5, 727, '#777', 4.5)

// 筹码分布
const profile = document.querySelector('#profile')
line(profile, 53, 96, 606, 96, '#c6d5e6', 4)
line(profile, 53, 805, 606, 805, '#bccbdc')
label(profile, 588, 132, '9.58', '', 'end')
label(profile, 588, 269, '7.50', '', 'end')
label(profile, 588, 446, '5.41', '', 'end')
label(profile, 588, 623, '3.33', '', 'end')
label(profile, 588, 800, '1.25', '', 'end')
add(profile, 'path', { d: 'M57 486L70 505 90 522 120 535 180 544 240 546 310 547 450 552 548 553V557L485 558 430 560 415 564 440 566 590 568V572L510 574 430 577 422 581H57z', fill: '#3072c0' })
add(profile, 'path', { d: 'M57 579H425V582L310 583 230 585 110 588 90 597 92 605 99 613 85 622 72 632 60 653H57zM57 667L66 685 57 699zM57 708L65 724 58 736 70 742 95 749V752L70 754 60 760 63 772 57 787z', fill: '#d02f2f' })
line(profile, 57, 570, 465, 570, '#6b86a0', 4)
line(profile, 465, 570, 522, 570, '#c8b56c', 6)
line(profile, 33, 586, 590, 586, '#333')
```
